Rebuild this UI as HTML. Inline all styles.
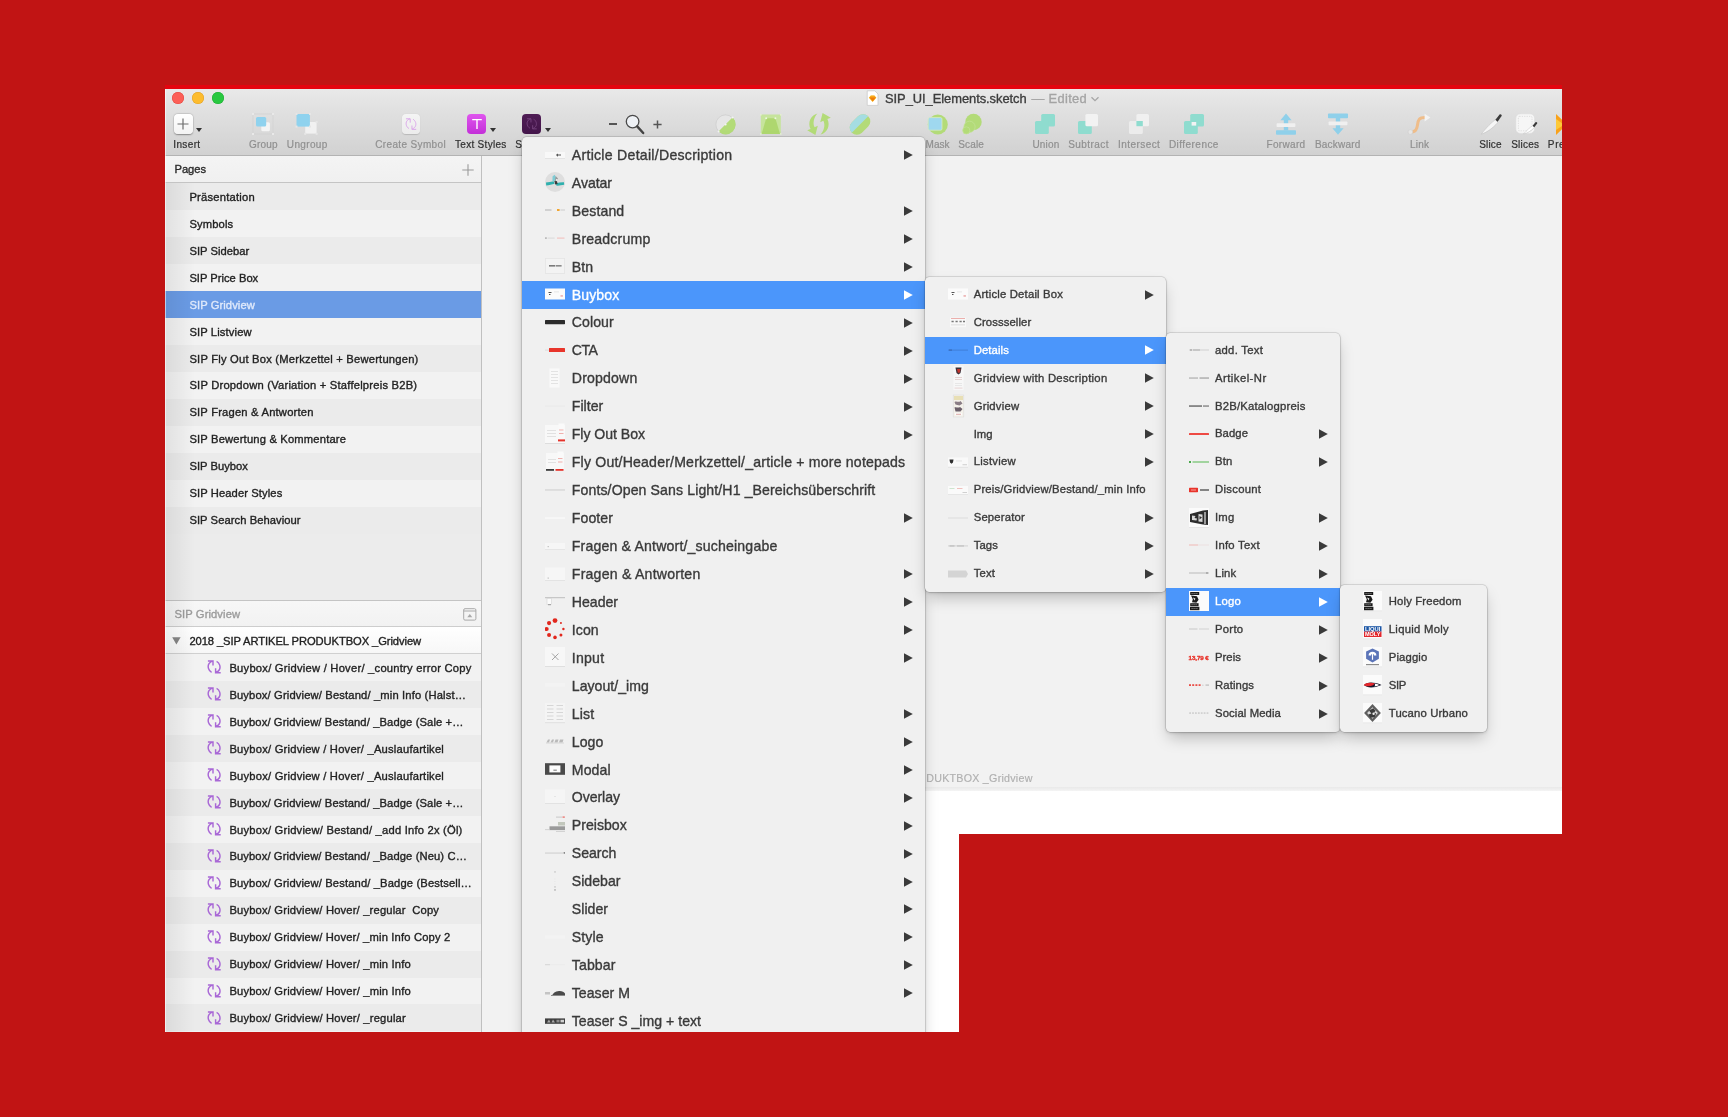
<!DOCTYPE html>
<html lang="de"><head><meta charset="utf-8"><title>SIP_UI_Elements.sketch</title><style>
html,body{margin:0;padding:0}
body{width:1728px;height:1117px;background:#c11414;position:relative;overflow:hidden;font-family:"Liberation Sans",sans-serif;}
.b{position:absolute;display:block}
.t{position:absolute;white-space:pre;margin:0;-webkit-text-stroke:.35px currentColor}
#root{position:absolute;left:0;top:0;width:1728px;height:1117px;background:#c11414;filter:blur(.45px)}
#win{position:absolute;left:0;top:0;width:1728px;height:1117px;clip-path:polygon(165px 89px,1562px 89px,1562px 834px,959px 834px,959px 1032px,165px 1032px);}
.menu{position:absolute;background:#f0f0f0;box-shadow:0 0 0 .5px rgba(0,0,0,.2),0 1px 3px rgba(0,0,0,.16),0 8px 16px -3px rgba(0,0,0,.25);}
</style></head>
<body>
<div id="root">
<div class="b " style="left:165px;top:85px;width:1397px;height:4px;background:#e4040f;"></div>
<div id="win">
<div class="b " style="left:165px;top:89px;width:1397px;height:67px;background:linear-gradient(#e9e9e9 0%,#e1e1e1 30%,#d1d1d1 100%);"></div>
<div class="b " style="left:165px;top:155px;width:1397px;height:1px;background:#b3b3b3;"></div>
<div class="b " style="left:172.3px;top:92.3px;width:12px;height:12px;background:#fc5f57;border-radius:50%;box-shadow:inset 0 0 0 .5px #e2463f;"></div>
<div class="b " style="left:192.2px;top:92.3px;width:12px;height:12px;background:#fdbc2e;border-radius:50%;box-shadow:inset 0 0 0 .5px #e0a028;"></div>
<div class="b " style="left:212.2px;top:92.3px;width:12px;height:12px;background:#28c840;border-radius:50%;box-shadow:inset 0 0 0 .5px #1fab33;"></div>
<svg class="b" style="left:866px;top:90px;" width="13" height="16" viewBox="0 0 13 16"><path d="M1.200 .8h7.600l3.200 3.200v11.400H1.200z" fill="#fff" stroke="#c9c9c9" stroke-width=".8"/><path d="M2.800 7.700l1.900-2.300h3.800l1.900 2.300-3.800 4.200z" fill="#fbb820"/><path d="M3.6 7.6l1.6-1.9h3l1.6 1.9-3.1 3.6z" fill="#f7a81b"/><path d="M3.6 7.6h6.2l-3.1 3.6z" fill="#ee7b0a"/></svg>
<div class="t " style="left:885.00px;top:88.00px;height:21px;line-height:21px;font-size:12.9px;color:#3c3c3c;letter-spacing:-0.045px;">SIP_UI_Elements.sketch</div>
<div class="t " style="left:1031.50px;top:88.00px;height:21px;line-height:21px;font-size:12.9px;color:#a4a4a4;letter-spacing:0.305px;">— Edited</div>
<svg class="b" style="left:1090px;top:95px;" width="10" height="8" viewBox="0 0 10 8"><path d="M1.5 2.2L5 5.6 8.5 2.2" fill="none" stroke="#a6a6a6" stroke-width="1.3"/></svg>
<div class="b " style="left:173.5px;top:114px;width:19px;height:20px;background:linear-gradient(#ffffff,#f3f3f3);border-radius:4px;box-shadow:0 .5px 1.5px rgba(0,0,0,.35),0 0 0 .5px rgba(0,0,0,.08);"></div>
<svg class="b" style="left:177px;top:118px;" width="12" height="12" viewBox="0 0 12 12"><path d="M6 .5v11M.5 6h11" stroke="#6d6d6d" stroke-width="1.2"/></svg>
<svg class="b" style="left:196.2px;top:127.8px;" width="6" height="4" viewBox="0 0 6 4"><path d="M0 0h6L3 4z" fill="#333"/></svg>
<div class="t " style="left:173.30px;top:136.00px;height:17px;line-height:17px;font-size:10px;color:#303030;letter-spacing:0.365px;-webkit-text-stroke:.2px currentColor;">Insert</div>
<svg class="b" style="left:252px;top:113px;" width="22" height="22" viewBox="0 0 22 22"><rect x="1" y="1" width="20" height="20" fill="none" stroke="#d0d0d0" stroke-width=".7"/><rect x="9.3" y="9.2" width="8.6" height="9" rx="1.5" fill="#f4f4f4"/><rect x="4" y="4" width="10.2" height="9.6" rx="1.5" fill="#8fd2ee"/><g fill="#e9e9e9"><rect x="0" y="0" width="2" height="2"/><rect x="20" y="0" width="2" height="2"/><rect x="0" y="20" width="2" height="2"/><rect x="20" y="20" width="2" height="2"/></g></svg>
<div class="t " style="left:249.00px;top:136.00px;height:17px;line-height:17px;font-size:10px;color:#909090;letter-spacing:0.201px;-webkit-text-stroke:.2px currentColor;">Group</div>
<svg class="b" style="left:295px;top:113px;" width="23" height="22" viewBox="0 0 23 22"><rect x="10.2" y="9" width="11.4" height="11.6" fill="#f1f1f1"/><rect x="1.5" y="1" width="13.4" height="12.6" fill="#8fd2ee"/><g fill="#e6e6e6"><rect x=".5" y="0" width="2" height="2"/><rect x="14" y="0" width="2" height="2"/><rect x=".5" y="12.6" width="2" height="2"/><rect x="14" y="12.6" width="2" height="2"/><rect x="20.6" y="8" width="2" height="2"/><rect x="20.6" y="19.8" width="2" height="2"/><rect x="9.2" y="19.8" width="2" height="2"/></g></svg>
<div class="t " style="left:286.80px;top:136.00px;height:17px;line-height:17px;font-size:10px;color:#909090;letter-spacing:0.363px;-webkit-text-stroke:.2px currentColor;">Ungroup</div>
<div class="b " style="left:401.7px;top:114.4px;width:18.6px;height:19.4px;background:linear-gradient(#f4f4f4,#ececec);border-radius:4px;box-shadow:0 .5px 1px rgba(0,0,0,.15);"></div>
<svg class="b" style="left:404.9px;top:118.2px;" width="12" height="12" viewBox="0 0 15 15"><path d="M5 13.200C1.800 11.600 .4 7 2.200 4 3.200 2.300 4.900 1.400 6.400 1M1.200 1H6.500V5.800M10 1.600c3.200 1.600 4.600 6.200 2.800 9.200-1 1.700-2.700 2.600-4.200 3M14 14.200H8.700V9.400" fill="none" stroke="#dba9ea" stroke-width="1.250" stroke-linejoin="miter"/></svg>
<div class="t " style="left:375.20px;top:136.00px;height:17px;line-height:17px;font-size:10px;color:#909090;letter-spacing:0.359px;-webkit-text-stroke:.2px currentColor;">Create Symbol</div>
<div class="b " style="left:466.7px;top:114px;width:19.6px;height:20.2px;background:linear-gradient(#df55ee,#c32fd8);border-radius:4px;"></div>
<svg class="b" style="left:470.5px;top:118px;" width="12" height="12" viewBox="0 0 12 12"><path d="M1.2 1.6h9.6M6 1.6v9.4" stroke="#fff" stroke-width="1.4" fill="none"/></svg>
<svg class="b" style="left:489.8px;top:127.8px;" width="6" height="4" viewBox="0 0 6 4"><path d="M0 0h6L3 4z" fill="#333"/></svg>
<div class="t " style="left:455.00px;top:136.00px;height:17px;line-height:17px;font-size:10px;color:#303030;letter-spacing:0.295px;-webkit-text-stroke:.2px currentColor;">Text Styles</div>
<div class="b " style="left:521.7px;top:114px;width:19.5px;height:20.2px;background:linear-gradient(#4f1d55,#43154a);border-radius:4px;"></div>
<svg class="b" style="left:525.6px;top:118.3px;" width="11.5" height="11.5" viewBox="0 0 15 15"><path d="M5 13.200C1.800 11.600 .4 7 2.200 4 3.200 2.300 4.900 1.400 6.400 1M1.200 1H6.500V5.800M10 1.600c3.200 1.600 4.600 6.200 2.800 9.200-1 1.700-2.700 2.600-4.200 3M14 14.200H8.700V9.400" fill="none" stroke="#74427c" stroke-width="1.250" stroke-linejoin="miter"/></svg>
<svg class="b" style="left:544.6px;top:127.8px;" width="6" height="4" viewBox="0 0 6 4"><path d="M0 0h6L3 4z" fill="#333"/></svg>
<div class="t " style="left:515.20px;top:136.00px;height:17px;line-height:17px;font-size:10px;color:#303030;letter-spacing:0.394px;-webkit-text-stroke:.2px currentColor;">Symbols</div>
<div class="b " style="left:609.4px;top:123.3px;width:7.4px;height:1.6px;background:#555;"></div>
<svg class="b" style="left:623px;top:112px;" width="24" height="24" viewBox="0 0 24 24"><circle cx="9.6" cy="9.6" r="6.3" fill="#eef1f5" stroke="#4a4a4a" stroke-width="1.3"/><path d="M14.2 14.4l6 6.6" stroke="#444" stroke-width="2.4" stroke-linecap="round"/></svg>
<svg class="b" style="left:653px;top:120px;" width="9" height="9" viewBox="0 0 9 9"><path d="M4.5 .4v8.2M.4 4.5h8.2" stroke="#555" stroke-width="1.5"/></svg>
<svg class="b" style="left:715px;top:113px;" width="23" height="23" viewBox="0 0 23 23"><circle cx="10.5" cy="11.5" r="9.6" fill="#e6e6e6" stroke="#c9c9c9" stroke-width=".6"/><path d="M17.6 4.4A9.9 9.9 0 0 1 3.6 18.6z" fill="#b3db78"/><path d="M17.6 4.4c3.6 3.4 3.8 10.6-.6 14-4 3-9.600 2.6-13.400.2z" fill="#b3db78"/><circle cx="10.6" cy="11.5" r="1" fill="#f4f4f4"/><circle cx="17.6" cy="4.600" r="1" fill="#f4f4f4"/><circle cx="3.6" cy="18.400" r="1" fill="#f4f4f4"/></svg>
<svg class="b" style="left:760px;top:114px;" width="22" height="21" viewBox="0 0 22 21"><rect x=".8" y=".6" width="20" height="19.400" rx="1" fill="#c6e49c"/><path d="M6.200 4.200h9.200l4.600 15.800H1.600z" fill="#aed76f"/><circle cx="6.200" cy="4.200" r="1" fill="#eef6e0"/><circle cx="15.400" cy="4.200" r="1" fill="#eef6e0"/><g fill="#e3efd0"><rect x="0" y="0" width="1.600" height="1.600"/><rect x="20" y="0" width="1.600" height="1.600"/><rect x="0" y="19.200" width="1.600" height="1.600"/><rect x="20" y="19.200" width="1.600" height="1.600"/></g></svg>
<svg class="b" style="left:806px;top:112px;" width="26" height="24" viewBox="0 0 26 24"><path d="M11.400 1.400C4.600 3.200 1.400 10.600 4.600 17l-3.400 1.200 8.200 4.800 2.400-9.200-3.200 1.400C6.600 11 7.800 5.400 11.400 1.400z" fill="#b3db78"/><path d="M14.600 22.600c6.800-1.800 10-9.200 6.800-15.600l3.400-1.200-8.200-4.800-2.400 9.200 3.200-1.400c2 4.200 .8 9.800-2.800 13.800z" fill="#b3db78"/></svg>
<svg class="b" style="left:848px;top:113px;" width="24" height="23" viewBox="0 0 24 23"><g transform="rotate(-45 12 11.500)"><rect x=".4" y="4.300" width="23.200" height="14.400" rx="7.200" fill="#b3db78"/><path d="M7.600 4.300h8.800a7.200 7.200 0 0 1 7.200 7.200H.4a7.200 7.200 0 0 1 7.200-7.200z" fill="#a5dde2"/></g></svg>
<svg class="b" style="left:926px;top:113px;" width="23" height="23" viewBox="0 0 23 23"><circle cx="11.800" cy="11.500" r="10" fill="#b3db78"/><rect x="2.200" y="4.600" width="13.800" height="12.600" rx="1.500" fill="#9fd8ef" stroke="#d8ecc0" stroke-width=".8"/></svg>
<div class="t " style="left:925.60px;top:136.00px;height:17px;line-height:17px;font-size:10px;color:#909090;letter-spacing:0.002px;-webkit-text-stroke:.2px currentColor;">Mask</div>
<svg class="b" style="left:960px;top:113px;" width="23" height="23" viewBox="0 0 23 23"><circle cx="13.500" cy="9" r="8.200" fill="#b3db78"/><circle cx="9.500" cy="13.800" r="5.600" fill="#b3db78" stroke="#c4e39a" stroke-width=".7"/><circle cx="6.300" cy="17.400" r="3.600" fill="#b3db78" stroke="#c4e39a" stroke-width=".7"/></svg>
<div class="t " style="left:958.30px;top:136.00px;height:17px;line-height:17px;font-size:10px;color:#909090;letter-spacing:0.117px;-webkit-text-stroke:.2px currentColor;">Scale</div>
<svg class="b" style="left:1034px;top:113px;" width="22" height="22" viewBox="0 0 22 22"><rect x="7.200" y="1" width="13.800" height="12.400" rx="1.500" fill="#8fdccf"/><rect x="1" y="8" width="13.800" height="13" rx="1.500" fill="#8fdccf"/></svg>
<div class="t " style="left:1032.40px;top:136.00px;height:17px;line-height:17px;font-size:10px;color:#909090;letter-spacing:0.214px;-webkit-text-stroke:.2px currentColor;">Union</div>
<svg class="b" style="left:1077px;top:113px;" width="22" height="22" viewBox="0 0 22 22"><rect x="1" y="8" width="13.800" height="13" rx="1.500" fill="#8fdccf"/><rect x="8.400" y="1" width="12.600" height="12.200" rx="1.500" fill="#f2f2f2"/></svg>
<div class="t " style="left:1068.20px;top:136.00px;height:17px;line-height:17px;font-size:10px;color:#909090;letter-spacing:0.432px;-webkit-text-stroke:.2px currentColor;">Subtract</div>
<svg class="b" style="left:1128px;top:113px;" width="22" height="22" viewBox="0 0 22 22"><rect x="8.400" y="1" width="12.600" height="12.200" rx="1.500" fill="#f0f0f0"/><rect x="1" y="8" width="13.800" height="13" rx="1.500" fill="#ececec"/><rect x="8.400" y="8" width="6.400" height="5.200" fill="#8fdccf"/></svg>
<div class="t " style="left:1118.00px;top:136.00px;height:17px;line-height:17px;font-size:10px;color:#909090;letter-spacing:0.439px;-webkit-text-stroke:.2px currentColor;">Intersect</div>
<svg class="b" style="left:1183px;top:113px;" width="22" height="22" viewBox="0 0 22 22"><rect x="7.200" y="1" width="13.800" height="12.400" rx="1.500" fill="#8fdccf"/><rect x="1" y="8" width="13.800" height="13" rx="1.500" fill="#8fdccf"/><rect x="8.600" y="9" width="4.600" height="3.600" fill="#f3f3f3"/></svg>
<div class="t " style="left:1168.90px;top:136.00px;height:17px;line-height:17px;font-size:10px;color:#909090;letter-spacing:0.460px;-webkit-text-stroke:.2px currentColor;">Difference</div>
<svg class="b" style="left:1275px;top:112px;" width="22" height="24" viewBox="0 0 22 24"><path d="M11 1.600l5.600 6.600h-3.400v10.400h-4.400V8.200H5.400z" fill="#8fd0ea"/><rect x="1" y="18.200" width="20" height="4.600" rx=".8" fill="#8fd0ea"/><rect x="1.600" y="11.200" width="18.800" height="3.800" rx=".8" fill="#f0f0f0"/></svg>
<div class="t " style="left:1266.60px;top:136.00px;height:17px;line-height:17px;font-size:10px;color:#909090;letter-spacing:0.304px;-webkit-text-stroke:.2px currentColor;">Forward</div>
<svg class="b" style="left:1327px;top:112px;" width="22" height="24" viewBox="0 0 22 24"><rect x="1" y="1.600" width="20" height="4.600" rx=".8" fill="#8fd0ea"/><path d="M11 22.800l-5.600-6.600h3.400V6h4.400v10.200h3.400z" fill="#8fd0ea"/><rect x="1.600" y="9.400" width="18.800" height="3.800" rx=".8" fill="#f0f0f0"/></svg>
<div class="t " style="left:1314.90px;top:136.00px;height:17px;line-height:17px;font-size:10px;color:#909090;letter-spacing:0.212px;-webkit-text-stroke:.2px currentColor;">Backward</div>
<svg class="b" style="left:1407px;top:112px;" width="26" height="24" viewBox="0 0 26 24"><path d="M3 20c6 0 7-3 7.600-7.500C11.200 8 12 5.600 18 5.600" fill="none" stroke="#efbd8a" stroke-width="3" stroke-linecap="round"/><path d="M17.600 1.800l5.800 3.800-5.800 3.800z" fill="#f3f3f3"/><circle cx="3.400" cy="20" r="2.400" fill="#e6e6e6" stroke="#d0d0d0" stroke-width=".6"/></svg>
<div class="t " style="left:1409.90px;top:136.00px;height:17px;line-height:17px;font-size:10px;color:#909090;letter-spacing:0.264px;-webkit-text-stroke:.2px currentColor;">Link</div>
<svg class="b" style="left:1480px;top:112px;" width="24" height="24" viewBox="0 0 24 24"><path d="M1.200 22.200C7 15 11 10.800 15.600 7.600l2.200 3C12.600 16.200 7 20.400 1.200 22.200z" fill="#f6f6f6" stroke="#bdbdbd" stroke-width=".5"/><path d="M15.400 7.800l4.200-5.200c.8-.9 2.700 .4 2 1.500l-4 5.600z" fill="#3b3b3b"/></svg>
<div class="t " style="left:1479.30px;top:136.00px;height:17px;line-height:17px;font-size:10px;color:#303030;letter-spacing:0.145px;-webkit-text-stroke:.2px currentColor;">Slice</div>
<svg class="b" style="left:1515px;top:113px;" width="24" height="23" viewBox="0 0 24 23"><rect x=".8" y=".8" width="18.800" height="19.600" rx="4.500" fill="#f6f6f6" stroke="#dadada" stroke-width=".6"/><rect x="3.400" y="3.400" width="13.600" height="14.400" rx="1" fill="none" stroke="#cfcfcf" stroke-width=".6" stroke-dasharray="1.200 1.200"/><path d="M8.600 21C12 17.200 14.600 14.600 17.800 12.600l1.500 2C16 18 12.400 20.200 8.600 21z" fill="#fff" stroke="#bdbdbd" stroke-width=".5"/><path d="M17.600 12.800l2.900-3.600c.7-.8 2.200 .3 1.600 1.200l-2.800 3.900z" fill="#3b3b3b"/></svg>
<div class="t " style="left:1511.20px;top:136.00px;height:17px;line-height:17px;font-size:10px;color:#303030;letter-spacing:0.221px;-webkit-text-stroke:.2px currentColor;">Slices</div>
<svg class="b" style="left:1555px;top:113px;" width="12" height="23" viewBox="0 0 12 23"><path d="M1 1l11 10.500L1 22z" fill="#f9a21a"/><path d="M1 6l8 5.500L1 17z" fill="#fdc938"/></svg>
<div class="t " style="left:1547.80px;top:136.00px;height:17px;line-height:17px;font-size:10px;color:#303030;letter-spacing:0.662px;-webkit-text-stroke:.2px currentColor;">Preview</div>
<div class="b " style="left:482px;top:156px;width:1080px;height:876px;background:#f2f2f2;"></div>
<div class="b " style="left:900px;top:787px;width:662px;height:4px;background:linear-gradient(#e9e9e9,#f4f4f4);"></div>
<div class="b " style="left:900px;top:791px;width:662px;height:241px;background:#ffffff;"></div>
<div class="t " style="left:926.20px;top:769.00px;height:18px;line-height:18px;font-size:10.7px;color:#b0b0b0;letter-spacing:0.255px;-webkit-text-stroke:.15px currentColor;">DUKTBOX _Gridview</div>
<div class="b " style="left:165px;top:156px;width:317px;height:876px;background:#ececec;"></div>
<div class="b " style="left:165px;top:156px;width:317px;height:26px;background:linear-gradient(#f4f4f4,#f0f0f0);"></div>
<div class="b " style="left:165px;top:182px;width:317px;height:1px;background:#c4c4c4;"></div>
<div class="t " style="left:174.50px;top:160.00px;height:18px;line-height:18px;font-size:11.2px;color:#2a2a2a;letter-spacing:-0.051px;">Pages</div>
<svg class="b" style="left:462px;top:163.5px;" width="12" height="12" viewBox="0 0 12 12"><path d="M6 .3v11.400M.3 6h11.400" stroke="#9a9a9a" stroke-width="1.100"/></svg>
<div class="b " style="left:165px;top:183.0px;width:317px;height:27.2px;background:#ebebeb;"></div>
<div class="t " style="left:189.40px;top:188.00px;height:18px;line-height:18px;font-size:11.2px;color:#222;letter-spacing:0.226px;">Präsentation</div>
<div class="b " style="left:165px;top:209.96px;width:317px;height:27.2px;background:#f2f2f2;"></div>
<div class="t " style="left:189.40px;top:215.00px;height:18px;line-height:18px;font-size:11.2px;color:#222;letter-spacing:0.136px;">Symbols</div>
<div class="b " style="left:165px;top:236.92000000000002px;width:317px;height:27.2px;background:#ebebeb;"></div>
<div class="t " style="left:189.40px;top:242.00px;height:18px;line-height:18px;font-size:11.2px;color:#222;letter-spacing:0.030px;">SIP Sidebar</div>
<div class="b " style="left:165px;top:263.88px;width:317px;height:27.2px;background:#f2f2f2;"></div>
<div class="t " style="left:189.40px;top:269.00px;height:18px;line-height:18px;font-size:11.2px;color:#222;letter-spacing:0.001px;">SIP Price Box</div>
<div class="b " style="left:165px;top:290.84000000000003px;width:317px;height:27.2px;background:#6a9be5;"></div>
<div class="t " style="left:189.40px;top:296.00px;height:18px;line-height:18px;font-size:11.2px;color:#dfe9fb;letter-spacing:0.089px;">SIP Gridview</div>
<div class="b " style="left:165px;top:317.8px;width:317px;height:27.2px;background:#f2f2f2;"></div>
<div class="t " style="left:189.40px;top:323.00px;height:18px;line-height:18px;font-size:11.2px;color:#222;letter-spacing:0.134px;">SIP Listview</div>
<div class="b " style="left:165px;top:344.76px;width:317px;height:27.2px;background:#ebebeb;"></div>
<div class="t " style="left:189.40px;top:350.00px;height:18px;line-height:18px;font-size:11.2px;color:#222;letter-spacing:0.213px;">SIP Fly Out Box (Merkzettel + Bewertungen)</div>
<div class="b " style="left:165px;top:371.72px;width:317px;height:27.2px;background:#f2f2f2;"></div>
<div class="t " style="left:189.40px;top:376.00px;height:19px;line-height:19px;font-size:11.2px;color:#222;letter-spacing:0.216px;">SIP Dropdown (Variation + Staffelpreis B2B)</div>
<div class="b " style="left:165px;top:398.68px;width:317px;height:27.2px;background:#ebebeb;"></div>
<div class="t " style="left:189.40px;top:403.00px;height:19px;line-height:19px;font-size:11.2px;color:#222;letter-spacing:0.202px;">SIP Fragen &amp; Antworten</div>
<div class="b " style="left:165px;top:425.64px;width:317px;height:27.2px;background:#f2f2f2;"></div>
<div class="t " style="left:189.40px;top:430.00px;height:19px;line-height:19px;font-size:11.2px;color:#222;letter-spacing:0.176px;">SIP Bewertung &amp; Kommentare</div>
<div class="b " style="left:165px;top:452.6px;width:317px;height:27.2px;background:#ebebeb;"></div>
<div class="t " style="left:189.40px;top:457.00px;height:19px;line-height:19px;font-size:11.2px;color:#222;letter-spacing:0.028px;">SIP Buybox</div>
<div class="b " style="left:165px;top:479.56px;width:317px;height:27.2px;background:#f2f2f2;"></div>
<div class="t " style="left:189.40px;top:484.00px;height:19px;line-height:19px;font-size:11.2px;color:#222;letter-spacing:0.105px;">SIP Header Styles</div>
<div class="b " style="left:165px;top:506.52px;width:317px;height:27.2px;background:#ebebeb;"></div>
<div class="t " style="left:189.40px;top:511.00px;height:19px;line-height:19px;font-size:11.2px;color:#222;letter-spacing:0.070px;">SIP Search Behaviour</div>
<div class="b " style="left:165px;top:534px;width:317px;height:66px;background:#ececec;"></div>
<div class="b " style="left:165px;top:600px;width:317px;height:1px;background:#c4c4c4;"></div>
<div class="b " style="left:165px;top:601px;width:317px;height:25px;background:linear-gradient(#f7f7f7,#f2f2f2);"></div>
<div class="b " style="left:165px;top:626px;width:317px;height:1px;background:#cdcdcd;"></div>
<div class="t " style="left:174.50px;top:605.00px;height:18px;line-height:18px;font-size:11.2px;color:#9b9b9b;letter-spacing:0.098px;">SIP Gridview</div>
<svg class="b" style="left:462.5px;top:607.5px;" width="14" height="13" viewBox="0 0 14 13"><rect x=".7" y=".7" width="12.200" height="11.400" rx="1.300" fill="none" stroke="#a9a9a9" stroke-width="1"/><path d="M.7 3h12.200" stroke="#a9a9a9" stroke-width="1"/><path d="M4.300 9.300l2.500-3.200 2.500 3.200z" fill="#a9a9a9"/></svg>
<div class="b " style="left:165px;top:627px;width:317px;height:26px;background:linear-gradient(#ffffff,#f7f7f7);"></div>
<div class="b " style="left:165px;top:653px;width:317px;height:1px;background:#d0d0d0;"></div>
<svg class="b" style="left:172.3px;top:637px;" width="9" height="8" viewBox="0 0 9 8"><path d="M.2 .3h8.400L4.400 7.600z" fill="#858585"/></svg>
<div class="t " style="left:189.40px;top:632.00px;height:18px;line-height:18px;font-size:11.2px;color:#222;letter-spacing:-0.084px;">2018 _SIP ARTIKEL PRODUKTBOX _Gridview</div>
<div class="b " style="left:165px;top:654.0px;width:317px;height:27.2px;background:#f2f2f2;"></div>
<svg class="b" style="left:207px;top:660.3px;" width="14" height="14" viewBox="0 0 14 14"><path d="M4.600 12.400C1.600 10.900 .2 6.500 2 3.700 3 2.100 4.600 1.300 6 .9M.9 .9H6V5.400M9.600 1.300c3 1.500 4.400 5.900 2.600 8.700-1 1.600-2.600 2.400-4 2.800M13.700 12.800H8.600V8.200" fill="none" stroke="#a968d6" stroke-width="1.450"/></svg>
<div class="t " style="left:229.40px;top:659.00px;height:18px;line-height:18px;font-size:11.2px;color:#222;letter-spacing:0.241px;">Buybox/ Gridview / Hover/ _country error Copy</div>
<div class="b " style="left:165px;top:680.96px;width:317px;height:27.2px;background:#ebebeb;"></div>
<svg class="b" style="left:207px;top:687.26px;" width="14" height="14" viewBox="0 0 14 14"><path d="M4.600 12.400C1.600 10.900 .2 6.500 2 3.700 3 2.100 4.600 1.300 6 .9M.9 .9H6V5.400M9.600 1.300c3 1.500 4.400 5.900 2.600 8.700-1 1.600-2.600 2.400-4 2.800M13.700 12.800H8.600V8.200" fill="none" stroke="#a968d6" stroke-width="1.450"/></svg>
<div class="t " style="left:229.40px;top:686.00px;height:18px;line-height:18px;font-size:11.2px;color:#222;letter-spacing:0.150px;">Buybox/ Gridview/ Bestand/ _min Info (Halst…</div>
<div class="b " style="left:165px;top:707.92px;width:317px;height:27.2px;background:#f2f2f2;"></div>
<svg class="b" style="left:207px;top:714.2199999999999px;" width="14" height="14" viewBox="0 0 14 14"><path d="M4.600 12.400C1.600 10.900 .2 6.500 2 3.700 3 2.100 4.600 1.300 6 .9M.9 .9H6V5.400M9.600 1.300c3 1.500 4.400 5.900 2.600 8.700-1 1.600-2.600 2.400-4 2.800M13.700 12.800H8.600V8.200" fill="none" stroke="#a968d6" stroke-width="1.450"/></svg>
<div class="t " style="left:229.40px;top:713.00px;height:18px;line-height:18px;font-size:11.2px;color:#222;letter-spacing:0.119px;">Buybox/ Gridview/ Bestand/ _Badge (Sale +…</div>
<div class="b " style="left:165px;top:734.88px;width:317px;height:27.2px;background:#ebebeb;"></div>
<svg class="b" style="left:207px;top:741.18px;" width="14" height="14" viewBox="0 0 14 14"><path d="M4.600 12.400C1.600 10.900 .2 6.500 2 3.700 3 2.100 4.600 1.300 6 .9M.9 .9H6V5.400M9.600 1.300c3 1.500 4.400 5.900 2.600 8.700-1 1.600-2.600 2.400-4 2.800M13.700 12.800H8.600V8.200" fill="none" stroke="#a968d6" stroke-width="1.450"/></svg>
<div class="t " style="left:229.40px;top:740.00px;height:18px;line-height:18px;font-size:11.2px;color:#222;letter-spacing:0.216px;">Buybox/ Gridview / Hover/ _Auslaufartikel</div>
<div class="b " style="left:165px;top:761.84px;width:317px;height:27.2px;background:#f2f2f2;"></div>
<svg class="b" style="left:207px;top:768.14px;" width="14" height="14" viewBox="0 0 14 14"><path d="M4.600 12.400C1.600 10.900 .2 6.500 2 3.700 3 2.100 4.600 1.300 6 .9M.9 .9H6V5.400M9.600 1.300c3 1.500 4.400 5.900 2.600 8.700-1 1.600-2.600 2.400-4 2.800M13.700 12.800H8.600V8.200" fill="none" stroke="#a968d6" stroke-width="1.450"/></svg>
<div class="t " style="left:229.40px;top:767.00px;height:18px;line-height:18px;font-size:11.2px;color:#222;letter-spacing:0.216px;">Buybox/ Gridview / Hover/ _Auslaufartikel</div>
<div class="b " style="left:165px;top:788.8px;width:317px;height:27.2px;background:#ebebeb;"></div>
<svg class="b" style="left:207px;top:795.0999999999999px;" width="14" height="14" viewBox="0 0 14 14"><path d="M4.600 12.400C1.600 10.900 .2 6.500 2 3.700 3 2.100 4.600 1.300 6 .9M.9 .9H6V5.400M9.600 1.300c3 1.500 4.400 5.900 2.600 8.700-1 1.600-2.600 2.400-4 2.800M13.700 12.800H8.600V8.200" fill="none" stroke="#a968d6" stroke-width="1.450"/></svg>
<div class="t " style="left:229.40px;top:794.00px;height:18px;line-height:18px;font-size:11.2px;color:#222;letter-spacing:0.119px;">Buybox/ Gridview/ Bestand/ _Badge (Sale +…</div>
<div class="b " style="left:165px;top:815.76px;width:317px;height:27.2px;background:#f2f2f2;"></div>
<svg class="b" style="left:207px;top:822.06px;" width="14" height="14" viewBox="0 0 14 14"><path d="M4.600 12.400C1.600 10.900 .2 6.500 2 3.700 3 2.100 4.600 1.300 6 .9M.9 .9H6V5.400M9.600 1.300c3 1.500 4.400 5.900 2.600 8.700-1 1.600-2.600 2.400-4 2.800M13.700 12.800H8.600V8.200" fill="none" stroke="#a968d6" stroke-width="1.450"/></svg>
<div class="t " style="left:229.40px;top:821.00px;height:18px;line-height:18px;font-size:11.2px;color:#222;letter-spacing:0.211px;">Buybox/ Gridview/ Bestand/ _add Info 2x (Öl)</div>
<div class="b " style="left:165px;top:842.72px;width:317px;height:27.2px;background:#ebebeb;"></div>
<svg class="b" style="left:207px;top:849.02px;" width="14" height="14" viewBox="0 0 14 14"><path d="M4.600 12.400C1.600 10.900 .2 6.500 2 3.700 3 2.100 4.600 1.300 6 .9M.9 .9H6V5.400M9.600 1.300c3 1.500 4.400 5.900 2.600 8.700-1 1.600-2.600 2.400-4 2.800M13.700 12.800H8.600V8.200" fill="none" stroke="#a968d6" stroke-width="1.450"/></svg>
<div class="t " style="left:229.40px;top:847.00px;height:19px;line-height:19px;font-size:11.2px;color:#222;letter-spacing:0.119px;">Buybox/ Gridview/ Bestand/ _Badge (Neu) C…</div>
<div class="b " style="left:165px;top:869.6800000000001px;width:317px;height:27.2px;background:#f2f2f2;"></div>
<svg class="b" style="left:207px;top:875.98px;" width="14" height="14" viewBox="0 0 14 14"><path d="M4.600 12.400C1.600 10.900 .2 6.500 2 3.700 3 2.100 4.600 1.300 6 .9M.9 .9H6V5.400M9.600 1.300c3 1.500 4.400 5.900 2.600 8.700-1 1.600-2.600 2.400-4 2.800M13.700 12.800H8.600V8.200" fill="none" stroke="#a968d6" stroke-width="1.450"/></svg>
<div class="t " style="left:229.40px;top:874.00px;height:19px;line-height:19px;font-size:11.2px;color:#222;letter-spacing:0.142px;">Buybox/ Gridview/ Bestand/ _Badge (Bestsell…</div>
<div class="b " style="left:165px;top:896.64px;width:317px;height:27.2px;background:#ebebeb;"></div>
<svg class="b" style="left:207px;top:902.9399999999999px;" width="14" height="14" viewBox="0 0 14 14"><path d="M4.600 12.400C1.600 10.900 .2 6.500 2 3.700 3 2.100 4.600 1.300 6 .9M.9 .9H6V5.400M9.600 1.300c3 1.500 4.400 5.900 2.600 8.700-1 1.600-2.600 2.400-4 2.800M13.700 12.800H8.600V8.200" fill="none" stroke="#a968d6" stroke-width="1.450"/></svg>
<div class="t " style="left:229.40px;top:901.00px;height:19px;line-height:19px;font-size:11.2px;color:#222;letter-spacing:0.179px;">Buybox/ Gridview/ Hover/ _regular  Copy</div>
<div class="b " style="left:165px;top:923.6px;width:317px;height:27.2px;background:#f2f2f2;"></div>
<svg class="b" style="left:207px;top:929.9px;" width="14" height="14" viewBox="0 0 14 14"><path d="M4.600 12.400C1.600 10.900 .2 6.500 2 3.700 3 2.100 4.600 1.300 6 .9M.9 .9H6V5.400M9.600 1.300c3 1.500 4.400 5.900 2.600 8.700-1 1.600-2.600 2.400-4 2.800M13.700 12.800H8.600V8.200" fill="none" stroke="#a968d6" stroke-width="1.450"/></svg>
<div class="t " style="left:229.40px;top:928.00px;height:19px;line-height:19px;font-size:11.2px;color:#222;letter-spacing:0.175px;">Buybox/ Gridview/ Hover/ _min Info Copy 2</div>
<div class="b " style="left:165px;top:950.56px;width:317px;height:27.2px;background:#ebebeb;"></div>
<svg class="b" style="left:207px;top:956.8599999999999px;" width="14" height="14" viewBox="0 0 14 14"><path d="M4.600 12.400C1.600 10.900 .2 6.500 2 3.700 3 2.100 4.600 1.300 6 .9M.9 .9H6V5.400M9.600 1.300c3 1.500 4.400 5.900 2.600 8.700-1 1.600-2.600 2.400-4 2.800M13.700 12.800H8.600V8.200" fill="none" stroke="#a968d6" stroke-width="1.450"/></svg>
<div class="t " style="left:229.40px;top:955.00px;height:19px;line-height:19px;font-size:11.2px;color:#222;letter-spacing:0.181px;">Buybox/ Gridview/ Hover/ _min Info</div>
<div class="b " style="left:165px;top:977.52px;width:317px;height:27.2px;background:#f2f2f2;"></div>
<svg class="b" style="left:207px;top:983.8199999999999px;" width="14" height="14" viewBox="0 0 14 14"><path d="M4.600 12.400C1.600 10.900 .2 6.500 2 3.700 3 2.100 4.600 1.300 6 .9M.9 .9H6V5.400M9.600 1.300c3 1.500 4.400 5.900 2.600 8.700-1 1.600-2.600 2.400-4 2.800M13.700 12.800H8.600V8.200" fill="none" stroke="#a968d6" stroke-width="1.450"/></svg>
<div class="t " style="left:229.40px;top:982.00px;height:19px;line-height:19px;font-size:11.2px;color:#222;letter-spacing:0.181px;">Buybox/ Gridview/ Hover/ _min Info</div>
<div class="b " style="left:165px;top:1004.48px;width:317px;height:27.2px;background:#ebebeb;"></div>
<svg class="b" style="left:207px;top:1010.78px;" width="14" height="14" viewBox="0 0 14 14"><path d="M4.600 12.400C1.600 10.900 .2 6.500 2 3.700 3 2.100 4.600 1.300 6 .9M.9 .9H6V5.400M9.600 1.300c3 1.500 4.400 5.900 2.600 8.700-1 1.600-2.600 2.400-4 2.800M13.700 12.800H8.600V8.200" fill="none" stroke="#a968d6" stroke-width="1.450"/></svg>
<div class="t " style="left:229.40px;top:1009.00px;height:19px;line-height:19px;font-size:11.2px;color:#222;letter-spacing:0.186px;">Buybox/ Gridview/ Hover/ _regular</div>
<div class="b " style="left:165px;top:1031.44px;width:317px;height:27.2px;background:#f2f2f2;"></div>
<svg class="b" style="left:207px;top:1037.74px;" width="14" height="14" viewBox="0 0 14 14"><path d="M4.600 12.400C1.600 10.900 .2 6.500 2 3.700 3 2.100 4.600 1.300 6 .9M.9 .9H6V5.400M9.600 1.300c3 1.500 4.400 5.900 2.600 8.700-1 1.600-2.600 2.400-4 2.800M13.700 12.800H8.600V8.200" fill="none" stroke="#a968d6" stroke-width="1.450"/></svg>
<div class="t " style="left:229.40px;top:1036.00px;height:19px;line-height:19px;font-size:11.2px;color:#222;letter-spacing:0.186px;">Buybox/ Gridview/ Hover/ _regular</div>
<div class="b " style="left:165px;top:183px;width:30px;height:849px;background:linear-gradient(90deg,rgba(0,0,0,.07),rgba(0,0,0,0));"></div>
<div class="b " style="left:481.3px;top:156px;width:1.2px;height:876px;background:#c0c0c0;"></div>
<div class="b " style="left:165px;top:89px;width:1px;height:943px;background:rgba(255,255,255,.55);"></div>
<div class="menu" style="left:522.2px;top:137px;width:402.8px;height:910px;border-radius:4.5px 4.5px 0 0;"></div>
<svg class="b" style="left:545px;top:142.5px;" width="20" height="24" viewBox="0 0 20 24"><rect x="0" y="9" width="20" height="6.500" fill="#f8f8f8"/><rect x="0" y="15" width="20" height=".7" fill="#dcdcdc"/><path d="M11 12h5M12.500 10.800v2.600" stroke="#555" stroke-width="1"/></svg>
<div class="t " style="left:571.80px;top:143.00px;height:24px;line-height:24px;font-size:14.1px;color:#3a3a3a;letter-spacing:0.274px;">Article Detail/Description</div>
<svg class="b" style="left:903.8px;top:150.1px;" width="9" height="10" viewBox="0 0 9 10"><path d="M0 .2L8.800 5 0 9.800z" fill="#3a3a3a"/></svg>
<svg class="b" style="left:545px;top:170.44px;" width="20" height="24" viewBox="0 0 20 24"><circle cx="10" cy="12" r="10" fill="#dedede"/><path d="M1 12.600c2.600-.2 5-.8 7.600-1.400l1 2.600c-2.600 .8-5.400 1.600-8.400 1.600z" fill="#2fb0ae"/><path d="M11.200 13.200c2.600-.6 5-1.200 7.800-1l.2 2.600c-2.800 .6-5.400 1-8 .8z" fill="#2fb0ae"/><path d="M7.600 6.200l2.200-1.400 1.400 3.200-1 3.400-2.800-.6z" fill="#7fcbd4"/><path d="M10.600 6l2.400 2.400-1.200 3.400-1.800-.4z" fill="#9a9a9a"/><path d="M9.400 11l2.600 .2 .6 2.800-2.400 .6z" fill="#3a3a3a"/><circle cx="11.800" cy="10" r=".9" fill="#f4f4f4"/></svg>
<div class="t " style="left:571.80px;top:171.00px;height:24px;line-height:24px;font-size:14.1px;color:#3a3a3a;letter-spacing:-0.049px;">Avatar</div>
<svg class="b" style="left:545px;top:198.38px;" width="20" height="24" viewBox="0 0 20 24"><rect x="0" y="11.400" width="6.500" height="1.200" fill="#bdbdbd"/><rect x="12" y="11" width="2.600" height="2" fill="#f1a531"/><rect x="15.500" y="11.400" width="4.500" height="1.200" fill="#d2d2d2"/></svg>
<div class="t " style="left:571.80px;top:199.00px;height:24px;line-height:24px;font-size:14.1px;color:#3a3a3a;letter-spacing:0.109px;">Bestand</div>
<svg class="b" style="left:903.8px;top:205.98px;" width="9" height="10" viewBox="0 0 9 10"><path d="M0 .2L8.800 5 0 9.800z" fill="#3a3a3a"/></svg>
<svg class="b" style="left:545px;top:226.32000000000002px;" width="20" height="24" viewBox="0 0 20 24"><rect x="0" y="11.300" width="1.800" height="1.600" fill="#b5b5b5"/><rect x="2.600" y="11.500" width="7" height="1.200" fill="#dcdcdc"/><rect x="12" y="11.500" width="7.500" height="1.200" fill="#f1c4c1"/></svg>
<div class="t " style="left:571.80px;top:227.00px;height:24px;line-height:24px;font-size:14.1px;color:#3a3a3a;letter-spacing:0.190px;">Breadcrump</div>
<svg class="b" style="left:903.8px;top:233.92000000000002px;" width="9" height="10" viewBox="0 0 9 10"><path d="M0 .2L8.800 5 0 9.800z" fill="#3a3a3a"/></svg>
<svg class="b" style="left:545px;top:254.26px;" width="20" height="24" viewBox="0 0 20 24"><rect x=".4" y="4.400" width="19.200" height="15" fill="#f3f3f3" stroke="#e4e4e4" stroke-width=".8"/><rect x="4" y="11" width="6" height="1.600" fill="#7a7a7a"/><rect x="10.600" y="11" width="6" height="1.600" fill="#8a8a8a"/></svg>
<div class="t " style="left:571.80px;top:255.00px;height:24px;line-height:24px;font-size:14.1px;color:#3a3a3a;letter-spacing:0.112px;">Btn</div>
<svg class="b" style="left:903.8px;top:261.86px;" width="9" height="10" viewBox="0 0 9 10"><path d="M0 .2L8.800 5 0 9.800z" fill="#3a3a3a"/></svg>
<div class="b " style="left:522.2px;top:280.75px;width:402.8px;height:28px;background:#4b96fb;"></div>
<svg class="b" style="left:545px;top:282.2px;" width="20" height="24" viewBox="0 0 20 24"><rect x="0" y="6.500" width="20" height="11" fill="#fbfbfb"/><path d="M3.500 10.500h3M4 12.500h1.500" stroke="#555" stroke-width="1.100"/><rect x="15.500" y="13.400" width="2.400" height="1.100" fill="#e58b8b"/><rect x="9" y="9.500" width="5" height=".8" fill="#e2e2e2"/></svg>
<div class="t " style="left:571.80px;top:283.00px;height:24px;line-height:24px;font-size:14.1px;color:#ffffff;letter-spacing:0.078px;">Buybox</div>
<svg class="b" style="left:903.8px;top:289.8px;" width="9" height="10" viewBox="0 0 9 10"><path d="M0 .2L8.800 5 0 9.800z" fill="#ffffff"/></svg>
<svg class="b" style="left:545px;top:310.14px;" width="20" height="24" viewBox="0 0 20 24"><rect x="0" y="10" width="20" height="4.200" rx=".6" fill="#2b2b2b"/></svg>
<div class="t " style="left:571.80px;top:310.00px;height:25px;line-height:25px;font-size:14.1px;color:#3a3a3a;letter-spacing:0.077px;">Colour</div>
<svg class="b" style="left:903.8px;top:317.74px;" width="9" height="10" viewBox="0 0 9 10"><path d="M0 .2L8.800 5 0 9.800z" fill="#3a3a3a"/></svg>
<svg class="b" style="left:545px;top:338.08px;" width="20" height="24" viewBox="0 0 20 24"><rect x="0" y="11.700" width="4" height=".8" fill="#d6d6d6"/><rect x="4" y="10" width="16" height="4" rx=".5" fill="#e8352b"/></svg>
<div class="t " style="left:571.80px;top:338.00px;height:25px;line-height:25px;font-size:14.1px;color:#3a3a3a;letter-spacing:-0.485px;">CTA</div>
<svg class="b" style="left:903.8px;top:345.68px;" width="9" height="10" viewBox="0 0 9 10"><path d="M0 .2L8.800 5 0 9.800z" fill="#3a3a3a"/></svg>
<svg class="b" style="left:545px;top:366.02px;" width="20" height="24" viewBox="0 0 20 24"><rect x="4.500" y="2.500" width="10" height="19" fill="#f9f9f9"/><path d="M6 5.500h7M6 8.500h7M6 11.500h7M6 14.500h7M6 17.500h7" stroke="#e0e0e0" stroke-width=".9"/></svg>
<div class="t " style="left:571.80px;top:366.00px;height:25px;line-height:25px;font-size:14.1px;color:#3a3a3a;letter-spacing:0.179px;">Dropdown</div>
<svg class="b" style="left:903.8px;top:373.62px;" width="9" height="10" viewBox="0 0 9 10"><path d="M0 .2L8.800 5 0 9.800z" fill="#3a3a3a"/></svg>
<svg class="b" style="left:545px;top:393.96px;" width="20" height="24" viewBox="0 0 20 24"><rect x="0" y="11.600" width="20" height=".9" fill="#e8e8e8"/></svg>
<div class="t " style="left:571.80px;top:394.00px;height:25px;line-height:25px;font-size:14.1px;color:#3a3a3a;letter-spacing:0.028px;">Filter</div>
<svg class="b" style="left:903.8px;top:401.56px;" width="9" height="10" viewBox="0 0 9 10"><path d="M0 .2L8.800 5 0 9.800z" fill="#3a3a3a"/></svg>
<svg class="b" style="left:545px;top:421.9px;" width="20" height="24" viewBox="0 0 20 24"><rect x="0" y="3" width="20" height="18.500" fill="#f8f8f8"/><rect x="13.500" y="1.500" width="6" height="8" fill="#fafafa"/><path d="M2 8.500h9M2 11.500h9M2 14.500h9" stroke="#dedede" stroke-width=".9"/><path d="M14 8h4.500M14 11.500h4.500" stroke="#f0b0ad" stroke-width="1"/><rect x="13" y="17.400" width="7" height="2" fill="#e5332b"/><rect x="0" y="21" width="20" height=".8" fill="#d8d8d8"/></svg>
<div class="t " style="left:571.80px;top:422.00px;height:25px;line-height:25px;font-size:14.1px;color:#3a3a3a;letter-spacing:-0.041px;">Fly Out Box</div>
<svg class="b" style="left:903.8px;top:429.5px;" width="9" height="10" viewBox="0 0 9 10"><path d="M0 .2L8.800 5 0 9.800z" fill="#3a3a3a"/></svg>
<svg class="b" style="left:545px;top:449.84000000000003px;" width="20" height="24" viewBox="0 0 20 24"><rect x="1" y="3" width="18" height="16" fill="#f8f8f8"/><rect x="12.500" y="1.500" width="6" height="7" fill="#fafafa"/><path d="M3 9.500h8M3 12.500h8" stroke="#dedede" stroke-width=".9"/><path d="M13 8.500h4.500M13 12h4.500" stroke="#f0b0ad" stroke-width="1"/><rect x="1" y="19" width="8" height="1.800" fill="#3a3a3a"/><rect x="10.500" y="19" width="8" height="1.800" fill="#e5332b"/></svg>
<div class="t " style="left:571.80px;top:450.00px;height:25px;line-height:25px;font-size:14.1px;color:#3a3a3a;letter-spacing:0.193px;">Fly Out/Header/Merkzettel/_article + more notepads</div>
<svg class="b" style="left:545px;top:477.78px;" width="20" height="24" viewBox="0 0 20 24"><rect x="0" y="11.300" width="20" height="1.300" fill="#d4d4d4"/></svg>
<div class="t " style="left:571.80px;top:478.00px;height:25px;line-height:25px;font-size:14.1px;color:#3a3a3a;letter-spacing:0.113px;">Fonts/Open Sans Light/H1 _Bereichsüberschrift</div>
<svg class="b" style="left:545px;top:505.72px;" width="20" height="24" viewBox="0 0 20 24"><rect x="0" y="11.400" width="20" height="1.300" fill="#fafafa"/></svg>
<div class="t " style="left:571.80px;top:506.00px;height:25px;line-height:25px;font-size:14.1px;color:#3a3a3a;letter-spacing:0.075px;">Footer</div>
<svg class="b" style="left:903.8px;top:513.32px;" width="9" height="10" viewBox="0 0 9 10"><path d="M0 .2L8.800 5 0 9.800z" fill="#3a3a3a"/></svg>
<svg class="b" style="left:545px;top:533.66px;" width="20" height="24" viewBox="0 0 20 24"><rect x="0" y="9" width="20" height="6.500" fill="#f6f6f6"/><rect x="0" y="15.300" width="20" height=".7" fill="#dedede"/><rect x="2.500" y="12" width="1.500" height="1.200" fill="#c8c8c8"/></svg>
<div class="t " style="left:571.80px;top:534.00px;height:25px;line-height:25px;font-size:14.1px;color:#3a3a3a;letter-spacing:0.174px;">Fragen &amp; Antwort/_sucheingabe</div>
<svg class="b" style="left:545px;top:561.6px;" width="20" height="24" viewBox="0 0 20 24"><rect x="0" y="5.500" width="20" height="13" fill="#f6f6f6"/><rect x="0" y="18.300" width="20" height=".7" fill="#dcdcdc"/><rect x="2.500" y="15.500" width="1.500" height="1.200" fill="#c8c8c8"/></svg>
<div class="t " style="left:571.80px;top:562.00px;height:24px;line-height:24px;font-size:14.1px;color:#3a3a3a;letter-spacing:0.227px;">Fragen &amp; Antworten</div>
<svg class="b" style="left:903.8px;top:569.2px;" width="9" height="10" viewBox="0 0 9 10"><path d="M0 .2L8.800 5 0 9.800z" fill="#3a3a3a"/></svg>
<svg class="b" style="left:545px;top:589.54px;" width="20" height="24" viewBox="0 0 20 24"><rect x="0" y="7.200" width="20" height="1" fill="#bdbdbd"/><rect x="2" y="8.500" width="4.500" height="6" fill="#fbfbfb" stroke="#d4d4d4" stroke-width=".6"/><rect x="3" y="14.200" width="3" height="1" fill="#9a9a9a"/></svg>
<div class="t " style="left:571.80px;top:590.00px;height:24px;line-height:24px;font-size:14.1px;color:#3a3a3a;letter-spacing:-0.008px;">Header</div>
<svg class="b" style="left:903.8px;top:597.14px;" width="9" height="10" viewBox="0 0 9 10"><path d="M0 .2L8.800 5 0 9.800z" fill="#3a3a3a"/></svg>
<svg class="b" style="left:545px;top:617.48px;" width="20" height="24" viewBox="0 0 20 24"><circle cx="18.40" cy="12.00" r="1.2" fill="#e1271d"/><circle cx="15.94" cy="17.94" r="1.5" fill="#e1271d"/><circle cx="10.00" cy="20.40" r="1.8" fill="#e1271d"/><circle cx="4.06" cy="17.94" r="2.0" fill="#e1271d"/><circle cx="1.60" cy="12.00" r="2.1" fill="#e1271d"/><circle cx="4.06" cy="6.06" r="2.1" fill="#e1271d"/><circle cx="10.00" cy="3.60" r="2.4" fill="#e1271d"/><circle cx="15.94" cy="6.06" r="1.0" fill="#e1271d"/></svg>
<div class="t " style="left:571.80px;top:618.00px;height:24px;line-height:24px;font-size:14.1px;color:#3a3a3a;letter-spacing:0.087px;">Icon</div>
<svg class="b" style="left:903.8px;top:625.08px;" width="9" height="10" viewBox="0 0 9 10"><path d="M0 .2L8.800 5 0 9.800z" fill="#3a3a3a"/></svg>
<svg class="b" style="left:545px;top:645.42px;" width="20" height="24" viewBox="0 0 20 24"><rect x="0" y="2" width="20" height="19.500" fill="#f7f7f7"/><rect x="0" y="21" width="20" height=".8" fill="#dadada"/><path d="M7 8.500l6.500 6.500M13.500 8.500L7 15" stroke="#9a9a9a" stroke-width=".9"/></svg>
<div class="t " style="left:571.80px;top:646.00px;height:24px;line-height:24px;font-size:14.1px;color:#3a3a3a;letter-spacing:0.228px;">Input</div>
<svg class="b" style="left:903.8px;top:653.02px;" width="9" height="10" viewBox="0 0 9 10"><path d="M0 .2L8.800 5 0 9.800z" fill="#3a3a3a"/></svg>
<svg class="b" style="left:545px;top:673.36px;" width="20" height="24" viewBox="0 0 20 24"><rect x="0" y="10" width="20" height="3.500" fill="#f3f3f3"/></svg>
<div class="t " style="left:571.80px;top:674.00px;height:24px;line-height:24px;font-size:14.1px;color:#3a3a3a;letter-spacing:0.017px;">Layout/_img</div>
<svg class="b" style="left:545px;top:701.3000000000001px;" width="20" height="24" viewBox="0 0 20 24"><rect x="0" y="2" width="20" height="20" fill="#f4f4f4"/><path d="M2 4.500h6.500M11.500 4.500h6.500M2 8h6.500M11.500 8h6.500M2 11.500h6.500M11.500 11.500h6.500M2 15h6.500M11.500 15h6.500M2 18.500h6.500M11.500 18.500h6.500" stroke="#d6d6d6" stroke-width="1"/><rect x="0" y="21.400" width="20" height=".7" fill="#d8d8d8"/></svg>
<div class="t " style="left:571.80px;top:702.00px;height:24px;line-height:24px;font-size:14.1px;color:#3a3a3a;letter-spacing:0.140px;">List</div>
<svg class="b" style="left:903.8px;top:708.9000000000001px;" width="9" height="10" viewBox="0 0 9 10"><path d="M0 .2L8.800 5 0 9.800z" fill="#3a3a3a"/></svg>
<svg class="b" style="left:545px;top:729.24px;" width="20" height="24" viewBox="0 0 20 24"><path d="M1.500 13.500l1.500-3h2l-1 3zM5.500 13.500l1.500-3h2l-1 3zM9.500 13.500l1-3h3l-1 3zM14 13.500l1-3h3.500l-1 3z" fill="#b9b9b9"/><rect x="1" y="13.600" width="18" height=".8" fill="#cfcfcf"/></svg>
<div class="t " style="left:571.80px;top:730.00px;height:24px;line-height:24px;font-size:14.1px;color:#3a3a3a;letter-spacing:0.033px;">Logo</div>
<svg class="b" style="left:903.8px;top:736.84px;" width="9" height="10" viewBox="0 0 9 10"><path d="M0 .2L8.800 5 0 9.800z" fill="#3a3a3a"/></svg>
<svg class="b" style="left:545px;top:757.1800000000001px;" width="20" height="24" viewBox="0 0 20 24"><rect x="0" y="6.200" width="20" height="11.600" fill="#4a4a4a"/><rect x="4.400" y="8.400" width="11" height="7" fill="#fdfdfd"/><rect x="8.400" y="12.600" width="3.400" height="1.200" fill="#8c8c8c"/></svg>
<div class="t " style="left:571.80px;top:758.00px;height:24px;line-height:24px;font-size:14.1px;color:#3a3a3a;letter-spacing:0.119px;">Modal</div>
<svg class="b" style="left:903.8px;top:764.7800000000001px;" width="9" height="10" viewBox="0 0 9 10"><path d="M0 .2L8.800 5 0 9.800z" fill="#3a3a3a"/></svg>
<svg class="b" style="left:545px;top:785.12px;" width="20" height="24" viewBox="0 0 20 24"><rect x="0" y="4.500" width="20" height="14" fill="#f5f5f5"/><rect x="0" y="18.200" width="20" height=".7" fill="#dadada"/><rect x="9" y="11" width="2" height=".8" fill="#e2e2e2"/></svg>
<div class="t " style="left:571.80px;top:785.00px;height:25px;line-height:25px;font-size:14.1px;color:#3a3a3a;letter-spacing:-0.054px;">Overlay</div>
<svg class="b" style="left:903.8px;top:792.72px;" width="9" height="10" viewBox="0 0 9 10"><path d="M0 .2L8.800 5 0 9.800z" fill="#3a3a3a"/></svg>
<svg class="b" style="left:545px;top:813.0600000000001px;" width="20" height="24" viewBox="0 0 20 24"><rect x="11" y="3.600" width="6" height="1" fill="#c9c9c9"/><rect x="17.500" y="3.400" width="2.300" height="1.400" fill="#ea7a74"/><rect x="13" y="9" width="7" height="3.500" fill="#c2c7bc"/><rect x="4.500" y="13.300" width="15.500" height="3.800" fill="#9a9a9a"/><rect x="0" y="16.300" width="5" height=".8" fill="#c9c9c9"/><rect x="11" y="18" width="9" height=".9" fill="#d0d0d0"/></svg>
<div class="t " style="left:571.80px;top:813.00px;height:25px;line-height:25px;font-size:14.1px;color:#3a3a3a;letter-spacing:0.018px;">Preisbox</div>
<svg class="b" style="left:903.8px;top:820.6600000000001px;" width="9" height="10" viewBox="0 0 9 10"><path d="M0 .2L8.800 5 0 9.800z" fill="#3a3a3a"/></svg>
<svg class="b" style="left:545px;top:841.0px;" width="20" height="24" viewBox="0 0 20 24"><rect x="0" y="11.500" width="18" height="1.100" fill="#d0d0d0"/><rect x="18.600" y="11" width="1.400" height="1.800" fill="#888"/></svg>
<div class="t " style="left:571.80px;top:841.00px;height:25px;line-height:25px;font-size:14.1px;color:#3a3a3a;letter-spacing:-0.029px;">Search</div>
<svg class="b" style="left:903.8px;top:848.6px;" width="9" height="10" viewBox="0 0 9 10"><path d="M0 .2L8.800 5 0 9.800z" fill="#3a3a3a"/></svg>
<svg class="b" style="left:545px;top:868.94px;" width="20" height="24" viewBox="0 0 20 24"><rect x="9" y="2.500" width="2" height=".9" fill="#bdbdbd"/><path d="M9.900 9.500v8" stroke="#e3e3e3" stroke-width=".8" stroke-dasharray="1 1.500"/><rect x="9" y="17.500" width="2" height=".9" fill="#bdbdbd"/><rect x="9" y="20.500" width="2" height=".9" fill="#9a9a9a"/></svg>
<div class="t " style="left:571.80px;top:869.00px;height:25px;line-height:25px;font-size:14.1px;color:#3a3a3a;letter-spacing:0.014px;">Sidebar</div>
<svg class="b" style="left:903.8px;top:876.5400000000001px;" width="9" height="10" viewBox="0 0 9 10"><path d="M0 .2L8.800 5 0 9.800z" fill="#3a3a3a"/></svg>
<svg class="b" style="left:545px;top:896.88px;" width="20" height="24" viewBox="0 0 20 24"></svg>
<div class="t " style="left:571.80px;top:897.00px;height:25px;line-height:25px;font-size:14.1px;color:#3a3a3a;letter-spacing:0.025px;">Slider</div>
<svg class="b" style="left:903.8px;top:904.48px;" width="9" height="10" viewBox="0 0 9 10"><path d="M0 .2L8.800 5 0 9.800z" fill="#3a3a3a"/></svg>
<svg class="b" style="left:545px;top:924.82px;" width="20" height="24" viewBox="0 0 20 24"><rect x="0" y="10.500" width="20" height="3" fill="#f3f3f3"/></svg>
<div class="t " style="left:571.80px;top:925.00px;height:25px;line-height:25px;font-size:14.1px;color:#3a3a3a;letter-spacing:0.131px;">Style</div>
<svg class="b" style="left:903.8px;top:932.4200000000001px;" width="9" height="10" viewBox="0 0 9 10"><path d="M0 .2L8.800 5 0 9.800z" fill="#3a3a3a"/></svg>
<svg class="b" style="left:545px;top:952.76px;" width="20" height="24" viewBox="0 0 20 24"><rect x="0" y="11.300" width="5" height=".9" fill="#d0d0d0"/><rect x="5" y="11.300" width="15" height=".9" fill="#eaeaea"/></svg>
<div class="t " style="left:571.80px;top:953.00px;height:25px;line-height:25px;font-size:14.1px;color:#3a3a3a;letter-spacing:0.098px;">Tabbar</div>
<svg class="b" style="left:903.8px;top:960.36px;" width="9" height="10" viewBox="0 0 9 10"><path d="M0 .2L8.800 5 0 9.800z" fill="#3a3a3a"/></svg>
<svg class="b" style="left:545px;top:980.7px;" width="20" height="24" viewBox="0 0 20 24"><rect x="0" y="11" width="5" height="2.500" fill="#c4c4c4"/><path d="M7 14.400c1-2 3-4 7-4.400 3-.2 5 1 6 2.400v2z" fill="#4a4a4a"/><rect x="6" y="14" width="14" height="1" fill="#8a8a8a"/></svg>
<div class="t " style="left:571.80px;top:981.00px;height:25px;line-height:25px;font-size:14.1px;color:#3a3a3a;letter-spacing:0.027px;">Teaser M</div>
<svg class="b" style="left:903.8px;top:988.3000000000001px;" width="9" height="10" viewBox="0 0 9 10"><path d="M0 .2L8.800 5 0 9.800z" fill="#3a3a3a"/></svg>
<svg class="b" style="left:545px;top:1008.64px;" width="20" height="24" viewBox="0 0 20 24"><rect x="0" y="9.400" width="20" height="5.400" fill="#3f3f3f"/><path d="M2 13.500l2-3 1.500 3zM6.500 13.500l1.500-3 2 3z" fill="#a9a9a9"/><rect x="11.500" y="10.800" width="3" height="2.600" fill="#8d8d8d"/><rect x="15.500" y="10.800" width="3.500" height="2.600" fill="#cfcfcf"/></svg>
<div class="t " style="left:571.80px;top:1009.00px;height:24px;line-height:24px;font-size:14.1px;color:#3a3a3a;letter-spacing:0.019px;">Teaser S _img + text</div>
<div class="menu" style="left:925px;top:276.5px;width:241.2px;height:315.3px;border-radius:4.5px;"></div>
<svg class="b" style="left:947.6px;top:282.1px;" width="20" height="24" viewBox="0 0 20 24"><rect x="0" y="6.500" width="20" height="11" fill="#fbfbfb"/><path d="M3.500 10.500h3M4 12.500h1.500" stroke="#555" stroke-width="1.100"/><rect x="15.500" y="13.400" width="2.400" height="1.100" fill="#e58b8b"/><rect x="9" y="9.500" width="5" height=".8" fill="#e2e2e2"/></svg>
<div class="t " style="left:973.70px;top:284.00px;height:20px;line-height:20px;font-size:11.3px;color:#3a3a3a;letter-spacing:0.192px;">Article Detail Box</div>
<svg class="b" style="left:1145.2px;top:289.6px;" width="9" height="10" viewBox="0 0 9 10"><path d="M0 .2L8.800 5 0 9.800z" fill="#3a3a3a"/></svg>
<svg class="b" style="left:947.6px;top:310.04px;" width="20" height="24" viewBox="0 0 20 24"><rect x="2" y="7.600" width="16" height="9.500" fill="#f8f8f8"/><rect x="3" y="8" width="14" height=".9" fill="#e9a6a3"/><path d="M3.500 11.500h2.200M7.500 11.500h2.200M11.500 11.500h2.200M15 11.500h2" stroke="#777" stroke-width="1.500"/><rect x="3" y="14.500" width="14" height=".8" fill="#d6d6d6"/></svg>
<div class="t " style="left:973.70px;top:312.00px;height:20px;line-height:20px;font-size:11.3px;color:#3a3a3a;letter-spacing:0.108px;">Crossseller</div>
<div class="b " style="left:925px;top:336.58000000000004px;width:241.2px;height:27.8px;background:#4b96fb;"></div>
<svg class="b" style="left:947.6px;top:337.98px;" width="20" height="24" viewBox="0 0 20 24"><rect x="0" y="11.600" width="20" height="1" fill="#3f7fd8"/><rect x="1" y="11.400" width="3" height="1.400" fill="#3a6fc0"/></svg>
<div class="t " style="left:973.70px;top:340.00px;height:20px;line-height:20px;font-size:11.3px;color:#ffffff;letter-spacing:0.109px;">Details</div>
<svg class="b" style="left:1145.2px;top:345.48px;" width="9" height="10" viewBox="0 0 9 10"><path d="M0 .2L8.800 5 0 9.800z" fill="#ffffff"/></svg>
<svg class="b" style="left:947.6px;top:365.92px;" width="20" height="24" viewBox="0 0 20 24"><rect x="5.500" y="0" width="10" height="24" fill="#f7f7f7"/><path d="M7.500 1.500h6l-1 5.500-2 1.500-2-1.500z" fill="#3a3038"/><path d="M9 3h3.500l-.8 3.800h-1.900z" fill="#c5342c"/><path d="M7 11.500h7M7 13.500h7" stroke="#e0c8c6" stroke-width=".8"/><path d="M7 17.500h7M7 19.500h7" stroke="#e2e2e2" stroke-width=".8"/><rect x="6.500" y="21.500" width="8" height="1.200" fill="#eadada"/></svg>
<div class="t " style="left:973.70px;top:368.00px;height:20px;line-height:20px;font-size:11.3px;color:#3a3a3a;letter-spacing:0.278px;">Gridview with Description</div>
<svg class="b" style="left:1145.2px;top:373.42px;" width="9" height="10" viewBox="0 0 9 10"><path d="M0 .2L8.800 5 0 9.800z" fill="#3a3a3a"/></svg>
<svg class="b" style="left:947.6px;top:393.86px;" width="20" height="24" viewBox="0 0 20 24"><rect x="5.200" y="1" width="10.600" height="22" fill="#f4f1ea" stroke="#d8d8d8" stroke-width=".5"/><rect x="6" y="2" width="9" height="4" fill="#e8dfb5"/><path d="M6.500 8c2-1.500 4 1 6-1l2 2.500-3 2-4-1z" fill="#8a7d86"/><path d="M6.500 13.500c1.500-1 3.500 1 5.500-.5l2.500 2-2 2.500h-5z" fill="#6b5f6a"/><rect x="7" y="19" width="7" height="2.400" fill="#fbfbfb"/><rect x="8" y="19.800" width="5" height=".9" fill="#d9a09c"/></svg>
<div class="t " style="left:973.70px;top:396.00px;height:20px;line-height:20px;font-size:11.3px;color:#3a3a3a;letter-spacing:0.206px;">Gridview</div>
<svg class="b" style="left:1145.2px;top:401.36px;" width="9" height="10" viewBox="0 0 9 10"><path d="M0 .2L8.800 5 0 9.800z" fill="#3a3a3a"/></svg>
<svg class="b" style="left:947.6px;top:421.80000000000007px;" width="20" height="24" viewBox="0 0 20 24"></svg>
<div class="t " style="left:973.70px;top:424.00px;height:20px;line-height:20px;font-size:11.3px;color:#3a3a3a;letter-spacing:-0.012px;">Img</div>
<svg class="b" style="left:1145.2px;top:429.30000000000007px;" width="9" height="10" viewBox="0 0 9 10"><path d="M0 .2L8.800 5 0 9.800z" fill="#3a3a3a"/></svg>
<svg class="b" style="left:947.6px;top:449.74px;" width="20" height="24" viewBox="0 0 20 24"><rect x="0" y="7.500" width="20" height="9.500" fill="#f9f9f9"/><path d="M1.500 9.500h4l-.5 3-1.500 1.300L2 12.500z" fill="#2f2f2f"/><rect x="8" y="10.500" width="6" height=".9" fill="#e2e2e2"/><rect x="14.500" y="14" width="4.500" height="1.300" fill="#d8d8d8"/><rect x="0" y="16.800" width="20" height=".7" fill="#dadada"/></svg>
<div class="t " style="left:973.70px;top:451.00px;height:21px;line-height:21px;font-size:11.3px;color:#3a3a3a;letter-spacing:0.251px;">Listview</div>
<svg class="b" style="left:1145.2px;top:457.24px;" width="9" height="10" viewBox="0 0 9 10"><path d="M0 .2L8.800 5 0 9.800z" fill="#3a3a3a"/></svg>
<svg class="b" style="left:947.6px;top:477.68000000000006px;" width="20" height="24" viewBox="0 0 20 24"><rect x="0" y="8" width="20" height="8.500" fill="#fafafa"/><rect x="1.500" y="10" width="5" height=".9" fill="#c9e2c9"/><rect x="9" y="10" width="5.500" height=".9" fill="#efb8b5"/><rect x="14.500" y="14" width="4.500" height="1" fill="#d0d0d0"/><rect x="0" y="16.300" width="20" height=".7" fill="#e0e0e0"/></svg>
<div class="t " style="left:973.70px;top:479.00px;height:21px;line-height:21px;font-size:11.3px;color:#3a3a3a;letter-spacing:0.157px;">Preis/Gridview/Bestand/_min Info</div>
<svg class="b" style="left:947.6px;top:505.62px;" width="20" height="24" viewBox="0 0 20 24"><rect x="0" y="11.500" width="20" height="1" fill="#dcdcdc"/></svg>
<div class="t " style="left:973.70px;top:507.00px;height:21px;line-height:21px;font-size:11.3px;color:#3a3a3a;letter-spacing:0.175px;">Seperator</div>
<svg class="b" style="left:1145.2px;top:513.12px;" width="9" height="10" viewBox="0 0 9 10"><path d="M0 .2L8.800 5 0 9.800z" fill="#3a3a3a"/></svg>
<svg class="b" style="left:947.6px;top:533.5600000000001px;" width="20" height="24" viewBox="0 0 20 24"><rect x="0" y="11.300" width="20" height="1.200" fill="#d6d6d6"/><rect x="1.500" y="11" width="5" height="1.800" fill="#c8c8c8"/><rect x="9" y="11" width="7" height="1.800" fill="#cbcbcb"/></svg>
<div class="t " style="left:973.70px;top:535.00px;height:21px;line-height:21px;font-size:11.3px;color:#3a3a3a;letter-spacing:0.108px;">Tags</div>
<svg class="b" style="left:1145.2px;top:541.0600000000001px;" width="9" height="10" viewBox="0 0 9 10"><path d="M0 .2L8.800 5 0 9.800z" fill="#3a3a3a"/></svg>
<svg class="b" style="left:947.6px;top:561.5px;" width="20" height="24" viewBox="0 0 20 24"><path d="M0 8.500h18l2 3.500-2 3.500H0z" fill="#d4d4d4"/></svg>
<div class="t " style="left:973.70px;top:563.00px;height:21px;line-height:21px;font-size:11.3px;color:#3a3a3a;letter-spacing:0.169px;">Text</div>
<svg class="b" style="left:1145.2px;top:569.0px;" width="9" height="10" viewBox="0 0 9 10"><path d="M0 .2L8.800 5 0 9.800z" fill="#3a3a3a"/></svg>
<div class="menu" style="left:1166.2px;top:332.8px;width:173.6px;height:399px;border-radius:4.5px;"></div>
<svg class="b" style="left:1188.6px;top:337.9px;" width="20" height="24" viewBox="0 0 20 24"><rect x="0" y="11.500" width="20" height="1" fill="#cfcfcf"/><rect x="1" y="11.300" width="2" height="1.400" fill="#aaa"/><rect x="4" y="11.300" width="7" height="1.400" fill="#bdbdbd"/></svg>
<div class="t " style="left:1215.00px;top:340.00px;height:20px;line-height:20px;font-size:11.3px;color:#3a3a3a;letter-spacing:0.272px;">add. Text</div>
<svg class="b" style="left:1188.6px;top:365.84px;" width="20" height="24" viewBox="0 0 20 24"><rect x="0" y="11.400" width="9" height="1.300" fill="#b3b3b3"/><rect x="10.500" y="11.400" width="9.500" height="1.300" fill="#a5a5a5"/></svg>
<div class="t " style="left:1215.00px;top:368.00px;height:20px;line-height:20px;font-size:11.3px;color:#3a3a3a;letter-spacing:0.462px;">Artikel-Nr</div>
<svg class="b" style="left:1188.6px;top:393.78px;" width="20" height="24" viewBox="0 0 20 24"><rect x="0" y="11.300" width="13" height="1.500" fill="#6e6e6e"/><rect x="14" y="11.300" width="6" height="1.500" fill="#8d8d8d"/></svg>
<div class="t " style="left:1215.00px;top:396.00px;height:20px;line-height:20px;font-size:11.3px;color:#3a3a3a;letter-spacing:0.199px;">B2B/Katalogpreis</div>
<svg class="b" style="left:1188.6px;top:421.71999999999997px;" width="20" height="24" viewBox="0 0 20 24"><rect x="0" y="11" width="20" height="2" rx=".5" fill="#ee4a44"/></svg>
<div class="t " style="left:1215.00px;top:423.00px;height:21px;line-height:21px;font-size:11.3px;color:#3a3a3a;letter-spacing:0.065px;">Badge</div>
<svg class="b" style="left:1318.6px;top:429.41999999999996px;" width="9" height="10" viewBox="0 0 9 10"><path d="M0 .2L8.800 5 0 9.800z" fill="#3a3a3a"/></svg>
<svg class="b" style="left:1188.6px;top:449.65999999999997px;" width="20" height="24" viewBox="0 0 20 24"><rect x="0" y="11" width="2" height="2" fill="#49a84a"/><rect x="3.500" y="11.200" width="16.500" height="1.600" fill="#8fce8c"/></svg>
<div class="t " style="left:1215.00px;top:451.00px;height:21px;line-height:21px;font-size:11.3px;color:#3a3a3a;letter-spacing:0.213px;">Btn</div>
<svg class="b" style="left:1318.6px;top:457.35999999999996px;" width="9" height="10" viewBox="0 0 9 10"><path d="M0 .2L8.800 5 0 9.800z" fill="#3a3a3a"/></svg>
<svg class="b" style="left:1188.6px;top:477.6px;" width="20" height="24" viewBox="0 0 20 24"><rect x="0" y="9.800" width="9" height="4.400" rx=".6" fill="#e8342b"/><rect x="2" y="11.500" width="5" height="1" fill="#f4a09b"/><rect x="11" y="11.200" width="9" height="1.600" fill="#6a6a6a"/></svg>
<div class="t " style="left:1215.00px;top:479.00px;height:21px;line-height:21px;font-size:11.3px;color:#3a3a3a;letter-spacing:0.292px;">Discount</div>
<svg class="b" style="left:1188.6px;top:505.53999999999996px;" width="20" height="24" viewBox="0 0 20 24"><rect x="0" y="2" width="20" height="20" fill="#fbfbfb"/><rect x="0" y="21.300" width="20" height=".7" fill="#dcdcdc"/><path d="M1 8l13-3.500 5-.5v15l-5-.6L1 16z" fill="#2c2c2c"/><path d="M3 9.500l3.500 .5-1 2 2.500 .5-.5 2L3 14zM9.500 8l4 .5v7.500l-4-.5z" fill="#d8d8d8"/><path d="M10.500 10l2.500 1.500-2.500 2z" fill="#2c2c2c"/><rect x="15" y="6" width="2" height="12" fill="#9a9a9a"/></svg>
<div class="t " style="left:1215.00px;top:507.00px;height:21px;line-height:21px;font-size:11.3px;color:#3a3a3a;letter-spacing:0.188px;">Img</div>
<svg class="b" style="left:1318.6px;top:513.24px;" width="9" height="10" viewBox="0 0 9 10"><path d="M0 .2L8.800 5 0 9.800z" fill="#3a3a3a"/></svg>
<svg class="b" style="left:1188.6px;top:533.48px;" width="20" height="24" viewBox="0 0 20 24"><rect x="0" y="11.500" width="9" height="1" fill="#f0b7b4"/><rect x="9" y="11.500" width="11" height="1" fill="#ece0df"/></svg>
<div class="t " style="left:1215.00px;top:535.00px;height:21px;line-height:21px;font-size:11.3px;color:#3a3a3a;letter-spacing:0.266px;">Info Text</div>
<svg class="b" style="left:1318.6px;top:541.1800000000001px;" width="9" height="10" viewBox="0 0 9 10"><path d="M0 .2L8.800 5 0 9.800z" fill="#3a3a3a"/></svg>
<svg class="b" style="left:1188.6px;top:561.42px;" width="20" height="24" viewBox="0 0 20 24"><rect x="0" y="11.500" width="20" height="1" fill="#b9b9b9"/><rect x="17" y="11.300" width="2" height="1.400" fill="#9f9f9f"/></svg>
<div class="t " style="left:1215.00px;top:563.00px;height:21px;line-height:21px;font-size:11.3px;color:#3a3a3a;letter-spacing:0.118px;">Link</div>
<svg class="b" style="left:1318.6px;top:569.12px;" width="9" height="10" viewBox="0 0 9 10"><path d="M0 .2L8.800 5 0 9.800z" fill="#3a3a3a"/></svg>
<div class="b " style="left:1166.2px;top:588.16px;width:173.6px;height:28px;background:#4b96fb;"></div>
<svg class="b" style="left:1188.6px;top:589.36px;" width="20" height="24" viewBox="0 0 20 24"><rect x="0" y="2" width="20" height="20" fill="#fbfbfb"/><g fill="#1c1c1c"><rect x="1.200" y="3" width="9" height="3"/><path d="M2 6.600l6 .6 1.600 3.600-2.200 3-4.400-.6 .8-3z"/><rect x="1.200" y="14.200" width="8.400" height="3"/><rect x="1" y="17.800" width="9.400" height="3.400"/></g><path d="M4 8.600l2.400 .8-.8 2.200z" fill="#f0f0f0"/><path d="M2.500 4.500h6.500M2.500 15.700h6M2.500 19.500h6.500" stroke="#e8e8e8" stroke-width=".5" stroke-dasharray="1.200 .8"/></svg>
<div class="t " style="left:1215.00px;top:591.00px;height:21px;line-height:21px;font-size:11.3px;color:#ffffff;letter-spacing:0.190px;">Logo</div>
<svg class="b" style="left:1318.6px;top:597.0600000000001px;" width="9" height="10" viewBox="0 0 9 10"><path d="M0 .2L8.800 5 0 9.800z" fill="#ffffff"/></svg>
<svg class="b" style="left:1188.6px;top:617.3px;" width="20" height="24" viewBox="0 0 20 24"><rect x="0" y="11.300" width="8.500" height="1.400" fill="#d3d3d3"/><rect x="10" y="11.300" width="10" height="1.400" fill="#dadada"/></svg>
<div class="t " style="left:1215.00px;top:619.00px;height:21px;line-height:21px;font-size:11.3px;color:#3a3a3a;letter-spacing:0.278px;">Porto</div>
<svg class="b" style="left:1318.6px;top:625.0px;" width="9" height="10" viewBox="0 0 9 10"><path d="M0 .2L8.800 5 0 9.800z" fill="#3a3a3a"/></svg>
<div class="t " style="left:1188.60px;top:652.00px;height:11px;line-height:11px;font-size:6.2px;color:#e8342b;letter-spacing:-0.098px;font-weight:700;">13,79 €</div>
<div class="t " style="left:1215.00px;top:647.00px;height:20px;line-height:20px;font-size:11.3px;color:#3a3a3a;letter-spacing:0.031px;">Preis</div>
<svg class="b" style="left:1318.6px;top:652.94px;" width="9" height="10" viewBox="0 0 9 10"><path d="M0 .2L8.800 5 0 9.800z" fill="#3a3a3a"/></svg>
<svg class="b" style="left:1188.6px;top:673.1800000000001px;" width="20" height="24" viewBox="0 0 20 24"><g fill="#ea4f48"><rect x="0" y="11.200" width="2" height="1.800"/><rect x="3.200" y="11.200" width="2" height="1.800"/><rect x="6.400" y="11.200" width="2" height="1.800"/><rect x="9.600" y="11.200" width="2" height="1.800"/></g><rect x="13" y="11.700" width="1.600" height="1" fill="#cfcfcf"/><rect x="16.500" y="11.400" width="3.500" height="1.400" fill="#c4c4c4"/></svg>
<div class="t " style="left:1215.00px;top:675.00px;height:20px;line-height:20px;font-size:11.3px;color:#3a3a3a;letter-spacing:0.112px;">Ratings</div>
<svg class="b" style="left:1318.6px;top:680.8800000000001px;" width="9" height="10" viewBox="0 0 9 10"><path d="M0 .2L8.800 5 0 9.800z" fill="#3a3a3a"/></svg>
<svg class="b" style="left:1188.6px;top:701.12px;" width="20" height="24" viewBox="0 0 20 24"><rect x="0.2" y="11.200" width="1.800" height="1.800" fill="#d2d2d2"/><rect x="3.1" y="11.200" width="1.800" height="1.800" fill="#d2d2d2"/><rect x="6.0" y="11.200" width="1.800" height="1.800" fill="#d2d2d2"/><rect x="8.9" y="11.200" width="1.800" height="1.800" fill="#d2d2d2"/><rect x="11.8" y="11.200" width="1.800" height="1.800" fill="#d2d2d2"/><rect x="14.7" y="11.200" width="1.800" height="1.800" fill="#d2d2d2"/><rect x="17.6" y="11.200" width="1.800" height="1.800" fill="#d2d2d2"/></svg>
<div class="t " style="left:1215.00px;top:703.00px;height:20px;line-height:20px;font-size:11.3px;color:#3a3a3a;letter-spacing:0.109px;">Social Media</div>
<svg class="b" style="left:1318.6px;top:708.82px;" width="9" height="10" viewBox="0 0 9 10"><path d="M0 .2L8.800 5 0 9.800z" fill="#3a3a3a"/></svg>
<div class="menu" style="left:1340.2px;top:584.6px;width:147px;height:147.2px;border-radius:4.5px;"></div>
<svg class="b" style="left:1363.1px;top:589.4px;" width="19" height="24" viewBox="0 0 19 24"><rect x="0" y="2" width="19" height="20" fill="#fbfbfb"/><rect x="0" y="21.600" width="19" height=".6" fill="#dedede"/><g fill="#1c1c1c"><rect x="1.200" y="3" width="9" height="3"/><path d="M2 6.600l6 .6 1.600 3.600-2.200 3-4.400-.6 .8-3z"/><rect x="1.200" y="14.200" width="8.400" height="3"/><rect x="1" y="17.800" width="9.400" height="3.400"/></g><path d="M4 8.600l2.400 .8-.8 2.200z" fill="#f0f0f0"/><path d="M2.500 4.500h6.500M2.500 15.700h6M2.500 19.500h6.500" stroke="#e8e8e8" stroke-width=".5" stroke-dasharray="1.200 .8"/></svg>
<div class="t " style="left:1388.80px;top:591.00px;height:21px;line-height:21px;font-size:11.3px;color:#3a3a3a;letter-spacing:0.145px;">Holy Freedom</div>
<svg class="b" style="left:1363.1px;top:617.3px;" width="19" height="24" viewBox="0 0 19 24"><rect x="0" y="2" width="19" height="20" fill="#fbfbfb"/><rect x="0" y="21.600" width="19" height=".6" fill="#dedede"/><rect x="1" y="9.200" width="17.500" height="5.400" fill="#1a55a5"/><rect x="1" y="14.600" width="17.500" height="5.400" fill="#e3262c"/><text x="9.700" y="13.900" font-family="Liberation Sans, sans-serif" font-weight="700" font-size="5.400" text-anchor="middle" fill="#fff" textLength="15.500" lengthAdjust="spacingAndGlyphs">LIQUI</text><text x="9.700" y="19.300" font-family="Liberation Sans, sans-serif" font-weight="700" font-size="5.400" text-anchor="middle" fill="#fff" textLength="15.500" lengthAdjust="spacingAndGlyphs">MOLY</text></svg>
<div class="t " style="left:1388.80px;top:619.00px;height:21px;line-height:21px;font-size:11.3px;color:#3a3a3a;letter-spacing:0.277px;">Liquid Moly</div>
<svg class="b" style="left:1363.1px;top:645.1999999999999px;" width="19" height="24" viewBox="0 0 19 24"><rect x="0" y="2" width="19" height="20" fill="#fbfbfb"/><rect x="0" y="21.600" width="19" height=".6" fill="#dedede"/><path d="M9.500 3.400l6.400 3.200v7.200l-6.400 3.600-6.400-3.600V6.600z" fill="#5b74b8"/><path d="M5.600 10.600c0-2.600 1.600-3.800 3.900-3.800s3.900 1.200 3.900 3.800h-2.400c0-1-.5-1.600-.9-1.600v5.800h-1.200V9c-.4 0-.9 .6-.9 1.600z" fill="#fff"/><rect x="3" y="19" width="13" height="1.200" fill="#8c8c8c"/></svg>
<div class="t " style="left:1388.80px;top:647.00px;height:20px;line-height:20px;font-size:11.3px;color:#3a3a3a;letter-spacing:0.129px;">Piaggio</div>
<svg class="b" style="left:1363.1px;top:673.0999999999999px;" width="19" height="24" viewBox="0 0 19 24"><rect x="0" y="2" width="19" height="20" fill="#fbfbfb"/><rect x="0" y="21.600" width="19" height=".6" fill="#dedede"/><path d="M1 12c3-3 9-3.600 17.600 0-8.600 3.600-14.600 3-17.600 0z" fill="#16162a"/><path d="M.6 12.200c2.400-2.600 7-3 11.400-1.600-1.600 2.400-7 3.600-11.400 1.600z" fill="#e3262c"/><path d="M11.500 10.500c2 .3 3.600 .8 4.800 1.500-1.300 .7-3 1.200-5 1.500 1-1 1-2 .2-3z" fill="#fff"/></svg>
<div class="t " style="left:1388.80px;top:675.00px;height:20px;line-height:20px;font-size:11.3px;color:#3a3a3a;letter-spacing:-0.371px;">SIP</div>
<svg class="b" style="left:1363.1px;top:701.0px;" width="19" height="24" viewBox="0 0 19 24"><rect x="0" y="2" width="19" height="20" fill="#fbfbfb"/><rect x="0" y="21.600" width="19" height=".6" fill="#dedede"/><path d="M9.500 3l8.400 9-8.400 9L1.100 12z" fill="#5f5f5f"/><path d="M9.500 6.200l5.400 5.800-5.400 5.800-5.400-5.800z" fill="#d9d9d9"/><path d="M6 9.600l4.400-2.400 2.200 2.800-1.600 1.400 2.200 1.200-1.600 3.600-4.400 .6-1.600-3.200 2.800-1z" fill="#3a3a3a"/><circle cx="10.600" cy="12.800" r="1.200" fill="#ededed"/></svg>
<div class="t " style="left:1388.80px;top:703.00px;height:20px;line-height:20px;font-size:11.3px;color:#3a3a3a;letter-spacing:0.133px;">Tucano Urbano</div>
</div>
</div>
</body></html>
